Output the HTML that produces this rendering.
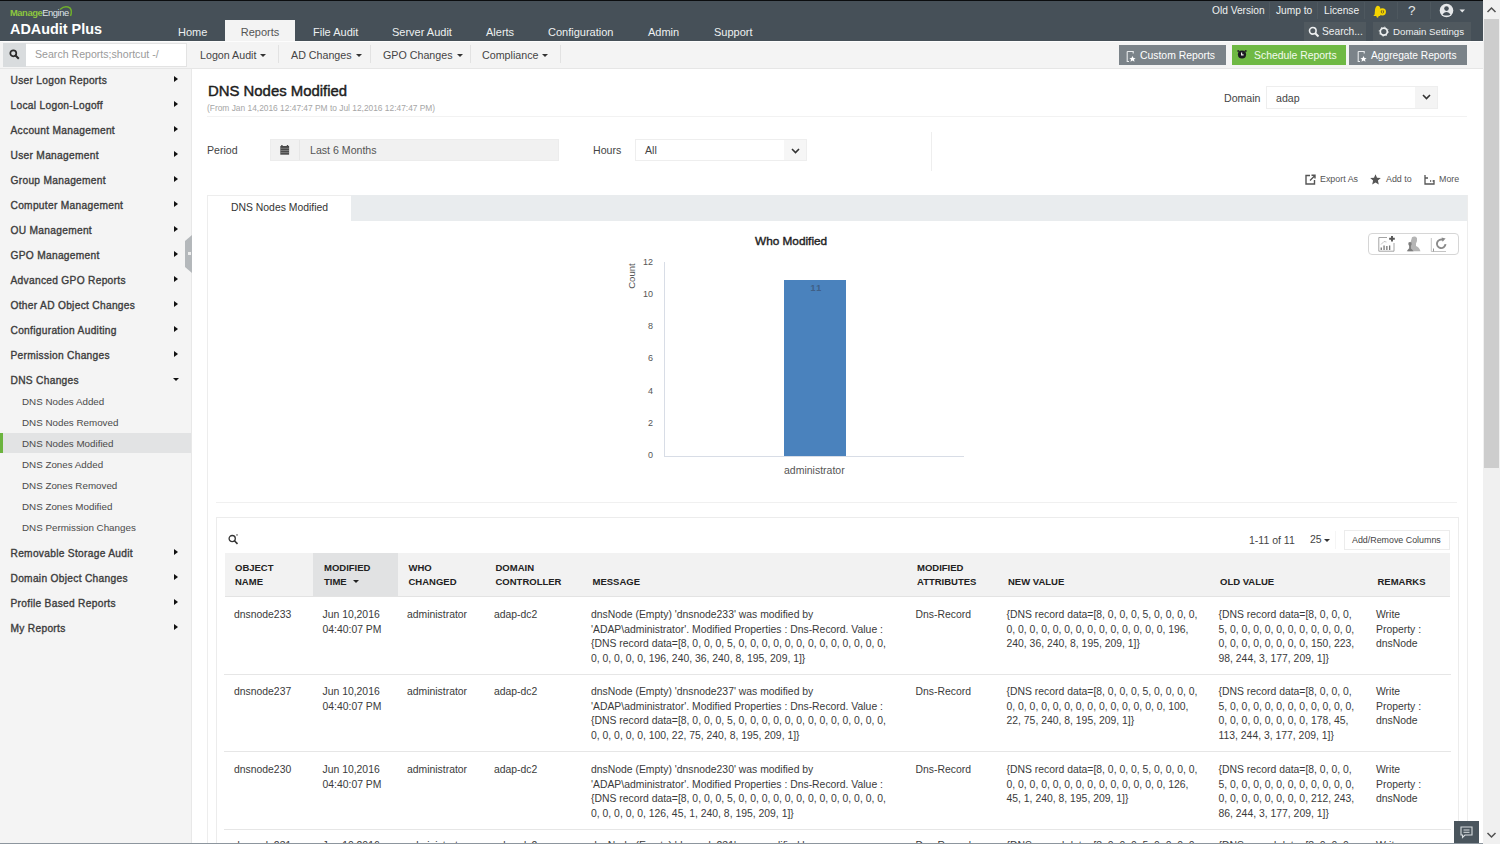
<!DOCTYPE html>
<html><head><meta charset="utf-8">
<style>
*{margin:0;padding:0;box-sizing:border-box}
html,body{width:1500px;height:844px;overflow:hidden;background:#fff;font-family:"Liberation Sans",sans-serif;color:#333}
.a{position:absolute;white-space:nowrap}
#top{position:absolute;left:0;top:0;width:1483px;height:41px;background:#465058;border-top:1px solid #0b0d0f}
.nav{position:absolute;top:19px;height:22px;line-height:20px;color:#eef0f1;font-size:11px;padding-top:2px}
#tool{position:absolute;left:0;top:41px;width:1483px;height:28px;background:#f4f4f4;border-bottom:1px solid #e6e6e6;border-top:1px solid #fdfdfd}
.tb{position:absolute;top:0px;height:27px;line-height:27px;font-size:10.7px;color:#444}
.sep{position:absolute;top:3px;width:1px;height:18px;background:#e2e2e2}
.caret{display:inline-block;width:0;height:0;border-left:3px solid transparent;border-right:3px solid transparent;border-top:3px solid #333;vertical-align:middle;margin-left:4px;position:relative;top:-1px}
.btn{position:absolute;top:3px;height:20px;line-height:21px;color:#fff;font-size:10.4px}
#side{position:absolute;left:0;top:69px;width:192px;height:775px;background:#f4f4f4;border-right:1px solid #e8e8e8}
.si{position:absolute;left:10.5px;height:16px;line-height:16px;font-size:10.2px;letter-spacing:0.3px;color:#3c3c3c;-webkit-text-stroke:0.35px #3c3c3c}
.sa{position:absolute;left:174px;width:0;height:0;border-top:3.5px solid transparent;border-bottom:3.5px solid transparent;border-left:4.5px solid #111}
.ss{position:absolute;left:22px;height:16px;line-height:16px;font-size:9.8px;color:#4a4a4a}
.t{position:absolute;white-space:nowrap;height:16px;line-height:16px}
</style></head><body>
<div id="top">
  <div class="a" style="left:10px;top:6px;font-size:9.4px;font-weight:bold;letter-spacing:-0.45px;line-height:11px"><span style="color:#8cc63f">Manage</span><span style="color:#dfe3e6;font-weight:normal">Engine</span></div><svg class="a" style="left:57px;top:3px" width="17" height="15" viewBox="0 0 17 15"><path d="M3 5.5 Q8 1 13 4 Q15.5 7 13.5 12" fill="none" stroke="#6fae2c" stroke-width="1.5"/></svg>
  <div class="a" style="left:10px;top:20px;font-size:14.4px;font-weight:bold;color:#fff;line-height:16px">ADAudit Plus</div>
  <div class="nav" style="left:178px">Home</div>
  <div class="nav" style="left:225px;width:70px;background:#f3f3f3;color:#555;text-align:center">Reports</div>
  <div class="nav" style="left:313px">File Audit</div>
  <div class="nav" style="left:392px">Server Audit</div>
  <div class="nav" style="left:486px">Alerts</div>
  <div class="nav" style="left:548px">Configuration</div>
  <div class="nav" style="left:648px">Admin</div>
  <div class="nav" style="left:714px">Support</div>

  <div class="a" style="left:1212px;top:2px;height:16px;line-height:16px;font-size:10.2px;color:#eef0f1">Old Version</div>
  <div class="a" style="left:1269px;top:1px;width:1px;height:17px;background:#4e585f"></div>
  <div class="a" style="left:1276px;top:2px;height:16px;line-height:16px;font-size:10.2px;color:#eef0f1">Jump to</div>
  <div class="a" style="left:1317px;top:1px;width:1px;height:17px;background:#4e585f"></div>
  <div class="a" style="left:1324px;top:2px;height:16px;line-height:16px;font-size:10.2px;color:#eef0f1">License</div>
  <div class="a" style="left:1364px;top:1px;width:1px;height:17px;background:#4e585f"></div>
  <svg class="a" style="left:1372px;top:3px" width="15" height="14" viewBox="0 0 15 14"><path d="M1.3 12 L2.6 10.5 L3 6 Q3.4 2 6 1.8 Q8 2 8.3 4 L8.3 12 Z" fill="#f5d400"/><circle cx="5.5" cy="12.6" r="1.1" fill="#f5d400"/><circle cx="10.4" cy="7.8" r="3.6" fill="#f5d400"/><circle cx="10.4" cy="7.8" r="1.7" fill="#7a6a20"/><rect x="9.9" y="6.3" width="1" height="2.6" fill="#f5d400"/></svg>
  <div class="a" style="left:1397px;top:1px;width:1px;height:17px;background:#4e585f"></div>
  <div class="a" style="left:1408px;top:1px;height:18px;line-height:18px;font-size:13.5px;color:#e6e8ea">?</div>
  <div class="a" style="left:1430px;top:1px;width:1px;height:17px;background:#4e585f"></div>
  <svg class="a" style="left:1439px;top:2px" width="28" height="16" viewBox="0 0 28 16"><circle cx="7.5" cy="7.5" r="6.8" fill="#e6e8ea"/><circle cx="7.5" cy="5.6" r="2.3" fill="#465058"/><path d="M3.6 11.2 Q7.5 7 11.4 11.2 L11 12 Q7.5 13 4 12 Z" fill="#465058"/><path d="M20.5 6.5 L26 6.5 L23.25 9.5 Z" fill="#e6e8ea"/></svg>
  <div class="a" style="left:1304px;top:21px;width:62px;height:19px;background:#50595f"></div>
  <svg class="a" style="left:1308px;top:25px" width="12" height="12" viewBox="0 0 12 12"><circle cx="4.8" cy="4.8" r="3.3" fill="none" stroke="#eef0f1" stroke-width="1.6"/><path d="M7.2 7.2 L10.5 10.5" stroke="#eef0f1" stroke-width="2"/></svg>
  <div class="a" style="left:1322px;top:23px;height:16px;line-height:16px;font-size:10.2px;color:#eef0f1">Search...</div>
  <div class="a" style="left:1373px;top:21px;width:98px;height:19px;background:#50595f"></div>
  <svg class="a" style="left:1378px;top:25px" width="12" height="12" viewBox="0 0 12 12"><circle cx="5.8" cy="5.6" r="3.5" fill="none" stroke="#eef0f1" stroke-width="1.7"/><circle cx="5.8" cy="5.6" r="4.6" fill="none" stroke="#eef0f1" stroke-width="0.9" stroke-dasharray="1.2 2.4"/></svg>
  <div class="a" style="left:1393px;top:23px;height:16px;line-height:16px;font-size:9.7px;color:#eef0f1">Domain Settings</div>
</div>
<div id="tool">
  <div class="a" style="left:3px;top:1px;width:23px;height:24px;background:#d9dcde"></div>
  <svg class="a" style="left:9px;top:7px" width="11" height="11" viewBox="0 0 11 11"><circle cx="4.3" cy="4.3" r="3" fill="none" stroke="#2b2b2b" stroke-width="1.7"/><path d="M6.5 6.5 L9.8 9.8" stroke="#2b2b2b" stroke-width="2"/></svg>
  <div class="a" style="left:26px;top:1px;width:161px;height:24px;background:#fff;border:1px solid #e3e3e3;border-left:none"></div>
  <div class="a" style="left:35px;top:4px;height:16px;line-height:16px;font-size:10.6px;color:#9a9a9a">Search Reports;shortcut -/</div>
  <div class="tb" style="left:200px">Logon Audit<span class="caret"></span></div>
  <div class="sep" style="left:278px"></div>
  <div class="tb" style="left:291px">AD Changes<span class="caret"></span></div>
  <div class="sep" style="left:370px"></div>
  <div class="tb" style="left:383px">GPO Changes<span class="caret"></span></div>
  <div class="sep" style="left:470px"></div>
  <div class="tb" style="left:482px">Compliance<span class="caret"></span></div>
  <div class="sep" style="left:560px"></div>
  <div class="btn" style="left:1119px;width:107px;background:#7b8389"></div>
  <svg class="a" style="left:1125.5px;top:7.5px" width="11" height="13" viewBox="0 0 11 13"><path d="M1.2 1.5 H7.2 V3.5 M1.2 1.5 V11.5 H3" fill="none" stroke="#e8eaec" stroke-width="1.1"/><path d="M6.5 6 L7.5 8 L9.6 8.2 L8 9.6 L8.5 11.7 L6.5 10.6 L4.5 11.7 L5 9.6 L3.4 8.2 L5.5 8 Z" fill="#fff"/></svg>
  <div class="btn" style="left:1140px;font-size:10.4px">Custom Reports</div>
  <div class="btn" style="left:1232px;width:114px;background:#6fb944"></div>
  <svg class="a" style="left:1236px;top:6px" width="12" height="12" viewBox="0 0 12 12"><circle cx="6" cy="6.5" r="4.1" fill="#1c1a22"/><circle cx="2.3" cy="3" r="1.1" fill="#2a2a2a"/><circle cx="9.7" cy="3" r="1.1" fill="#2a2a2a"/><path d="M5.6 4.6 V6.9 H7.6" stroke="#eee" stroke-width="1.2" fill="none"/></svg>
  <div class="btn" style="left:1254px;font-size:10.4px;color:#f4fbef">Schedule Reports</div>
  <div class="btn" style="left:1349px;width:118px;background:#7b8389"></div>
  <svg class="a" style="left:1356.5px;top:7.5px" width="11" height="13" viewBox="0 0 11 13"><path d="M1.2 1.5 H7.2 V3.5 M1.2 1.5 V11.5 H3" fill="none" stroke="#e8eaec" stroke-width="1.1"/><path d="M6.5 6 L7.5 8 L9.6 8.2 L8 9.6 L8.5 11.7 L6.5 10.6 L4.5 11.7 L5 9.6 L3.4 8.2 L5.5 8 Z" fill="#fff"/></svg>
  <div class="btn" style="left:1371px;font-size:10.2px">Aggregate Reports</div>
</div>
<div id="side">
  <div class="a" style="left:0;top:364.0px;width:191px;height:20px;background:#e2e3e4"></div>
  <div class="a" style="left:0;top:364.0px;width:3px;height:20px;background:#6cb43f"></div>
  <div class="si" style="top:3.5px">User Logon Reports</div>
  <div class="sa" style="top:7.0px"></div>
  <div class="si" style="top:28.5px">Local Logon-Logoff</div>
  <div class="sa" style="top:32.0px"></div>
  <div class="si" style="top:53.5px">Account Management</div>
  <div class="sa" style="top:57.0px"></div>
  <div class="si" style="top:78.5px">User Management</div>
  <div class="sa" style="top:82.0px"></div>
  <div class="si" style="top:103.5px">Group Management</div>
  <div class="sa" style="top:107.0px"></div>
  <div class="si" style="top:128.5px">Computer Management</div>
  <div class="sa" style="top:132.0px"></div>
  <div class="si" style="top:153.5px">OU Management</div>
  <div class="sa" style="top:157.0px"></div>
  <div class="si" style="top:178.5px">GPO Management</div>
  <div class="sa" style="top:182.0px"></div>
  <div class="si" style="top:203.5px">Advanced GPO Reports</div>
  <div class="sa" style="top:207.0px"></div>
  <div class="si" style="top:228.5px">Other AD Object Changes</div>
  <div class="sa" style="top:232.0px"></div>
  <div class="si" style="top:253.5px">Configuration Auditing</div>
  <div class="sa" style="top:257.0px"></div>
  <div class="si" style="top:278.5px">Permission Changes</div>
  <div class="sa" style="top:282.0px"></div>
  <div class="si" style="top:303.5px">DNS Changes</div>
  <div class="a" style="left:173px;top:308.5px;width:0;height:0;border-left:3.5px solid transparent;border-right:3.5px solid transparent;border-top:3.0px solid #111"></div>
  <div class="si" style="top:476.5px">Removable Storage Audit</div>
  <div class="sa" style="top:480.0px"></div>
  <div class="si" style="top:501.5px">Domain Object Changes</div>
  <div class="sa" style="top:505.0px"></div>
  <div class="si" style="top:526.5px">Profile Based Reports</div>
  <div class="sa" style="top:530.0px"></div>
  <div class="si" style="top:551.5px">My Reports</div>
  <div class="sa" style="top:555.0px"></div>
  <div class="ss" style="top:324.5px">DNS Nodes Added</div>
  <div class="ss" style="top:345.5px">DNS Nodes Removed</div>
  <div class="ss" style="top:366.5px">DNS Nodes Modified</div>
  <div class="ss" style="top:387.5px">DNS Zones Added</div>
  <div class="ss" style="top:408.5px">DNS Zones Removed</div>
  <div class="ss" style="top:430.0px">DNS Zones Modified</div>
  <div class="ss" style="top:451.0px">DNS Permission Changes</div>
  <svg class="a" style="left:185px;top:166.0px" width="7" height="38" viewBox="0 0 7 38"><path d="M0 6 L7 0 L7 38 L0 32 Z" fill="#b4b8bb"/><rect x="3" y="17" width="3" height="3" fill="#eee"/></svg>
</div>
<div id="main">
  <div class="t" style="left:208px;top:82px;height:18px;line-height:18px;font-size:14.9px;color:#1e1e1e;-webkit-text-stroke:0.45px #1e1e1e">DNS Nodes Modified</div>
  <div class="t" style="left:207px;top:100.5px;height:14px;line-height:14px;font-size:8.4px;color:#a6a6a6">(From Jan 14,2016 12:47:47 PM to Jul 12,2016 12:47:47 PM)</div>
  <div class="a" style="left:207px;top:116px;width:1260px;height:1px;background:#f2f2f2"></div>
  <div class="t" style="left:1224px;top:90.0px;font-size:10.6px;color:#444">Domain</div>
  <div class="a" style="left:1266px;top:86px;width:172px;height:23px;background:#fff;border:1px solid #eeeeee"></div>
  <div class="a" style="left:1415px;top:87px;width:22px;height:21px;background:#f4f4f4"></div>
  <svg class="a" style="left:1422px;top:94px" width="9" height="6" viewBox="0 0 9 6"><path d="M1 1 L4.5 4.5 L8 1" fill="none" stroke="#333" stroke-width="1.6"/></svg>
  <div class="t" style="left:1276px;top:90.0px;font-size:10.6px;color:#444">adap</div>

  <div class="t" style="left:207px;top:142.0px;font-size:10.6px;color:#444">Period</div>
  <div class="a" style="left:270px;top:139px;width:289px;height:22px;background:#f1f1f1;border:1px solid #ececec"></div>
  <div class="a" style="left:299px;top:140px;width:1px;height:20px;background:#e6e6e6"></div>
  <svg class="a" style="left:280px;top:145px" width="10" height="10" viewBox="0 0 10 10"><rect x="0.3" y="1" width="8.8" height="8.7" fill="#4a4a4a"/><rect x="1.2" y="0" width="1.4" height="1.5" fill="#4a4a4a"/><rect x="6.8" y="0" width="1.4" height="1.5" fill="#4a4a4a"/><path d="M0.3 3.3 H9.1 M0.3 5.5 H9.1 M0.3 7.6 H9.1" stroke="#9a9a9a" stroke-width="0.6"/></svg>
  <div class="t" style="left:310px;top:142.0px;font-size:10.6px;color:#555">Last 6 Months</div>

  <div class="t" style="left:593px;top:142.0px;font-size:10.6px;color:#444">Hours</div>
  <div class="a" style="left:635px;top:139px;width:172px;height:22px;background:#fff;border:1px solid #eeeeee"></div>
  <div class="a" style="left:784px;top:140px;width:22px;height:20px;background:#f6f6f6"></div>
  <svg class="a" style="left:791px;top:147.5px" width="9" height="6" viewBox="0 0 9 6"><path d="M1 1 L4.5 4.5 L8 1" fill="none" stroke="#333" stroke-width="1.6"/></svg>
  <div class="t" style="left:645px;top:142.0px;font-size:10.6px;color:#444">All</div>
  <div class="a" style="left:931px;top:132px;width:1px;height:39px;background:#eeeeee"></div>

  <svg class="a" style="left:1305px;top:174px" width="11" height="11" viewBox="0 0 11 11"><path d="M5 1.5 H1 V10 H9.5 V6" fill="none" stroke="#555" stroke-width="1.4"/><path d="M5 6.5 L9.5 2 M6.5 1.2 H10 V4.5" fill="none" stroke="#555" stroke-width="1.4"/></svg>
  <div class="t" style="left:1320px;top:171.0px;font-size:8.9px;color:#555">Export As</div>
  <svg class="a" style="left:1370px;top:174px" width="11" height="11" viewBox="0 0 11 11"><path d="M5.5 0.3 L7 3.8 L10.8 4.1 L7.9 6.6 L8.8 10.4 L5.5 8.4 L2.2 10.4 L3.1 6.6 L0.2 4.1 L4 3.8 Z" fill="#555"/></svg>
  <div class="t" style="left:1386px;top:171.0px;font-size:8.9px;color:#555">Add to</div>
  <svg class="a" style="left:1424px;top:174px" width="11" height="11" viewBox="0 0 11 11"><path d="M1 1 V10 H10 V6" fill="none" stroke="#555" stroke-width="1.3"/><path d="M1 4 H4 M6 7 H7.2 M8.6 7 H10" stroke="#555" stroke-width="1.3"/></svg>
  <div class="t" style="left:1439px;top:171.0px;font-size:8.9px;color:#555">More</div>

  <div class="a" style="left:207px;top:195px;width:1261px;height:649px;border:1px solid #ededed;border-bottom:none"></div>
  <div class="a" style="left:351px;top:195px;width:1116px;height:26px;background:#e9ecee"></div>
  <div class="t" style="left:231px;top:200.0px;font-size:10.4px;color:#333">DNS Nodes Modified</div>
  <div class="a" style="left:1368px;top:233px;width:91px;height:22px;border:1px solid #d6d6d6;border-radius:4px;background:#fff"></div>
  <svg class="a" style="left:1365px;top:230px" width="97" height="28" viewBox="0 0 97 28"><path d="M14 7.5 H22 M13.8 7.3 V21.2 H29 V13" fill="none" stroke="#9a9a9a" stroke-width="0.9"/><path d="M16 14.5 L19 11.5 L21.5 12" fill="none" stroke="#aaa" stroke-width="0.7"/><rect x="15.6" y="17.5" width="1.3" height="2.5" fill="#777"/><rect x="18.4" y="15.5" width="1.3" height="4.5" fill="#777"/><rect x="21.2" y="16" width="1.3" height="4" fill="#777"/><rect x="24" y="15.5" width="1.3" height="4.5" fill="#777"/><path d="M27 6 V11.5 M24.2 8.8 H29.8" stroke="#555" stroke-width="1.9"/><path d="M47 7.2 Q50 5.6 52 8 Q52.5 11 51 13.5 L51 16 Q54 17 55.5 21.3 L43 21.3 Z" fill="#b5b5b5"/><path d="M41.8 21.2 Q43 19.5 44.3 18.6 L44.2 16 Q42.8 14 43.5 12.5 Q45 11.5 46.5 12.5 Q47 14.5 45.9 16 L45.9 18.6 Q47.5 19.6 48.5 21.2 Z" fill="#7d7d7d"/><path d="M66.3 8 V21.5 H81" fill="none" stroke="#bdbdbd" stroke-width="0.9"/><rect x="68" y="18.5" width="1" height="3" fill="#999"/><path d="M80.5 14.2 A4.3 4.3 0 1 1 78.2 10" fill="none" stroke="#8a8a8a" stroke-width="1.9"/><path d="M76.6 7.4 L80.6 8.6 L77.6 11.8 Z" fill="#8a8a8a"/></svg>

  <div class="t" style="left:755px;top:233px;font-size:11.8px;color:#1e1e1e;-webkit-text-stroke:0.4px #1e1e1e">Who Modified</div>
  <div class="a" style="left:623px;top:268px;width:18px;height:16px;line-height:16px;font-size:9.6px;color:#555;transform:rotate(-90deg);transform-origin:50% 50%;text-align:center;width:30px;left:617px">Count</div>
  <div class="a" style="left:664px;top:262px;width:1px;height:195px;background:#d8dde6"></div>
  <div class="a" style="left:664px;top:456px;width:300px;height:1px;background:#d8dde6"></div>
  <div class="a" style="left:784px;top:280px;width:62px;height:176px;background:#4a82bd"></div>
  <div class="t" style="left:810.5px;top:280px;font-size:9px;font-weight:bold;color:#3f5f86;letter-spacing:1.2px">11</div>
  <div class="t" style="left:784px;top:462px;font-size:10.5px;color:#555">administrator</div>
  <div class="t" style="left:625px;width:28px;text-align:right;top:253.6px;font-size:9px;color:#555">12</div>
  <div class="t" style="left:625px;width:28px;text-align:right;top:285.9px;font-size:9px;color:#555">10</div>
  <div class="t" style="left:625px;width:28px;text-align:right;top:318.2px;font-size:9px;color:#555">8</div>
  <div class="t" style="left:625px;width:28px;text-align:right;top:350.4px;font-size:9px;color:#555">6</div>
  <div class="t" style="left:625px;width:28px;text-align:right;top:382.7px;font-size:9px;color:#555">4</div>
  <div class="t" style="left:625px;width:28px;text-align:right;top:415.0px;font-size:9px;color:#555">2</div>
  <div class="t" style="left:625px;width:28px;text-align:right;top:447.2px;font-size:9px;color:#555">0</div>
  <div class="a" style="left:216px;top:502px;width:1241px;height:1px;background:#f0f0f0"></div>

</div>
<div id="table">
  <div class="a" style="left:216px;top:517px;width:1243px;height:330px;border:1px solid #ececec;border-bottom:none"></div>
  <svg class="a" style="left:228px;top:534px" width="11" height="11" viewBox="0 0 11 11"><circle cx="4.2" cy="4.6" r="3.1" fill="none" stroke="#333" stroke-width="1.3"/><path d="M6.4 6.8 L9.5 9.9" stroke="#333" stroke-width="1.6"/><path d="M8 0.5 L10 0.5 L9 2 Z" fill="#333"/></svg>
  <div class="t" style="left:1249px;top:532.0px;font-size:10.5px;color:#444">1-11 of 11</div>
  <div class="t" style="left:1310px;top:531.0px;font-size:10.5px;color:#444">25</div>
  <div class="a" style="left:1324px;top:539px;width:0;height:0;border-left:3px solid transparent;border-right:3px solid transparent;border-top:3px solid #333"></div>
  <div class="a" style="left:1335px;top:531px;width:1px;height:18px;background:#f5f5f5"></div>
  <div class="a" style="left:1344px;top:530px;width:106px;height:20px;border:1px solid #ececec;background:#fff"></div>
  <div class="t" style="left:1352px;top:532.0px;font-size:8.9px;color:#444">Add/Remove Columns</div>
  <div class="a" style="left:225px;top:553px;width:1225px;height:44px;background:#f2f2f2;border-bottom:1px solid #e3e3e3"></div>
  <div class="a" style="left:313px;top:553px;width:85px;height:43px;background:#e1e2e3"></div>
  <div class="t" style="left:235.0px;top:560.2px;font-size:9.5px;font-weight:bold;color:#222">OBJECT</div>
  <div class="t" style="left:235.0px;top:574.0px;font-size:9.5px;font-weight:bold;color:#222">NAME</div>
  <div class="t" style="left:324.0px;top:560.2px;font-size:9.5px;font-weight:bold;color:#222">MODIFIED</div>
  <div class="t" style="left:324.0px;top:574.0px;font-size:9.5px;font-weight:bold;color:#222">TIME</div>
  <div class="t" style="left:408.5px;top:560.2px;font-size:9.5px;font-weight:bold;color:#222">WHO</div>
  <div class="t" style="left:408.5px;top:574.0px;font-size:9.5px;font-weight:bold;color:#222">CHANGED</div>
  <div class="t" style="left:495.5px;top:560.2px;font-size:9.5px;font-weight:bold;color:#222">DOMAIN</div>
  <div class="t" style="left:495.5px;top:574.0px;font-size:9.5px;font-weight:bold;color:#222">CONTROLLER</div>
  <div class="t" style="left:592.5px;top:574.0px;font-size:9.5px;font-weight:bold;color:#222">MESSAGE</div>
  <div class="t" style="left:917.0px;top:560.2px;font-size:9.5px;font-weight:bold;color:#222">MODIFIED</div>
  <div class="t" style="left:917.0px;top:574.0px;font-size:9.5px;font-weight:bold;color:#222">ATTRIBUTES</div>
  <div class="t" style="left:1008.0px;top:574.0px;font-size:9.5px;font-weight:bold;color:#222">NEW VALUE</div>
  <div class="t" style="left:1220.0px;top:574.0px;font-size:9.5px;font-weight:bold;color:#222">OLD VALUE</div>
  <div class="t" style="left:1377.5px;top:574.0px;font-size:9.5px;font-weight:bold;color:#222">REMARKS</div>
  <div class="a" style="left:353px;top:580px;width:0;height:0;border-left:3.5px solid transparent;border-right:3.5px solid transparent;border-top:3.5px solid #222"></div>
  <div class="t" style="left:234.0px;top:607.0px;font-size:10.4px;color:#3a3a3a">dnsnode233</div>
  <div class="t" style="left:322.5px;top:607.0px;font-size:10.4px;color:#3a3a3a">Jun 10,2016</div>
  <div class="t" style="left:322.5px;top:621.5px;font-size:10.4px;color:#3a3a3a">04:40:07 PM</div>
  <div class="t" style="left:407.0px;top:607.0px;font-size:10.4px;color:#3a3a3a">administrator</div>
  <div class="t" style="left:494.0px;top:607.0px;font-size:10.4px;color:#3a3a3a">adap-dc2</div>
  <div class="t" style="left:591.0px;top:607.0px;font-size:10.4px;color:#3a3a3a">dnsNode (Empty) 'dnsnode233' was modified by</div>
  <div class="t" style="left:591.0px;top:621.5px;font-size:10.4px;color:#3a3a3a">'ADAP\administrator'. Modified Properties : Dns-Record. Value :</div>
  <div class="t" style="left:591.0px;top:636.0px;font-size:10.4px;color:#3a3a3a">{DNS record data=[8, 0, 0, 0, 5, 0, 0, 0, 0, 0, 0, 0, 0, 0, 0, 0, 0, 0,</div>
  <div class="t" style="left:591.0px;top:650.5px;font-size:10.4px;color:#3a3a3a">0, 0, 0, 0, 0, 196, 240, 36, 240, 8, 195, 209, 1]}</div>
  <div class="t" style="left:915.5px;top:607.0px;font-size:10.4px;color:#3a3a3a">Dns-Record</div>
  <div class="t" style="left:1006.5px;top:607.0px;font-size:10.4px;color:#3a3a3a">{DNS record data=[8, 0, 0, 0, 5, 0, 0, 0, 0,</div>
  <div class="t" style="left:1006.5px;top:621.5px;font-size:10.4px;color:#3a3a3a">0, 0, 0, 0, 0, 0, 0, 0, 0, 0, 0, 0, 0, 0, 196,</div>
  <div class="t" style="left:1006.5px;top:636.0px;font-size:10.4px;color:#3a3a3a">240, 36, 240, 8, 195, 209, 1]}</div>
  <div class="t" style="left:1218.5px;top:607.0px;font-size:10.4px;color:#3a3a3a">{DNS record data=[8, 0, 0, 0,</div>
  <div class="t" style="left:1218.5px;top:621.5px;font-size:10.4px;color:#3a3a3a">5, 0, 0, 0, 0, 0, 0, 0, 0, 0, 0, 0,</div>
  <div class="t" style="left:1218.5px;top:636.0px;font-size:10.4px;color:#3a3a3a">0, 0, 0, 0, 0, 0, 0, 0, 150, 223,</div>
  <div class="t" style="left:1218.5px;top:650.5px;font-size:10.4px;color:#3a3a3a">98, 244, 3, 177, 209, 1]}</div>
  <div class="t" style="left:1376.0px;top:607.0px;font-size:10.4px;color:#3a3a3a">Write</div>
  <div class="t" style="left:1376.0px;top:621.5px;font-size:10.4px;color:#3a3a3a">Property :</div>
  <div class="t" style="left:1376.0px;top:636.0px;font-size:10.4px;color:#3a3a3a">dnsNode</div>
  <div class="t" style="left:234.0px;top:684.1px;font-size:10.4px;color:#3a3a3a">dnsnode237</div>
  <div class="t" style="left:322.5px;top:684.1px;font-size:10.4px;color:#3a3a3a">Jun 10,2016</div>
  <div class="t" style="left:322.5px;top:698.6px;font-size:10.4px;color:#3a3a3a">04:40:07 PM</div>
  <div class="t" style="left:407.0px;top:684.1px;font-size:10.4px;color:#3a3a3a">administrator</div>
  <div class="t" style="left:494.0px;top:684.1px;font-size:10.4px;color:#3a3a3a">adap-dc2</div>
  <div class="t" style="left:591.0px;top:684.1px;font-size:10.4px;color:#3a3a3a">dnsNode (Empty) 'dnsnode237' was modified by</div>
  <div class="t" style="left:591.0px;top:698.6px;font-size:10.4px;color:#3a3a3a">'ADAP\administrator'. Modified Properties : Dns-Record. Value :</div>
  <div class="t" style="left:591.0px;top:713.1px;font-size:10.4px;color:#3a3a3a">{DNS record data=[8, 0, 0, 0, 5, 0, 0, 0, 0, 0, 0, 0, 0, 0, 0, 0, 0, 0,</div>
  <div class="t" style="left:591.0px;top:727.6px;font-size:10.4px;color:#3a3a3a">0, 0, 0, 0, 0, 100, 22, 75, 240, 8, 195, 209, 1]}</div>
  <div class="t" style="left:915.5px;top:684.1px;font-size:10.4px;color:#3a3a3a">Dns-Record</div>
  <div class="t" style="left:1006.5px;top:684.1px;font-size:10.4px;color:#3a3a3a">{DNS record data=[8, 0, 0, 0, 5, 0, 0, 0, 0,</div>
  <div class="t" style="left:1006.5px;top:698.6px;font-size:10.4px;color:#3a3a3a">0, 0, 0, 0, 0, 0, 0, 0, 0, 0, 0, 0, 0, 0, 100,</div>
  <div class="t" style="left:1006.5px;top:713.1px;font-size:10.4px;color:#3a3a3a">22, 75, 240, 8, 195, 209, 1]}</div>
  <div class="t" style="left:1218.5px;top:684.1px;font-size:10.4px;color:#3a3a3a">{DNS record data=[8, 0, 0, 0,</div>
  <div class="t" style="left:1218.5px;top:698.6px;font-size:10.4px;color:#3a3a3a">5, 0, 0, 0, 0, 0, 0, 0, 0, 0, 0, 0,</div>
  <div class="t" style="left:1218.5px;top:713.1px;font-size:10.4px;color:#3a3a3a">0, 0, 0, 0, 0, 0, 0, 0, 178, 45,</div>
  <div class="t" style="left:1218.5px;top:727.6px;font-size:10.4px;color:#3a3a3a">113, 244, 3, 177, 209, 1]}</div>
  <div class="t" style="left:1376.0px;top:684.1px;font-size:10.4px;color:#3a3a3a">Write</div>
  <div class="t" style="left:1376.0px;top:698.6px;font-size:10.4px;color:#3a3a3a">Property :</div>
  <div class="t" style="left:1376.0px;top:713.1px;font-size:10.4px;color:#3a3a3a">dnsNode</div>
  <div class="t" style="left:234.0px;top:762.1px;font-size:10.4px;color:#3a3a3a">dnsnode230</div>
  <div class="t" style="left:322.5px;top:762.1px;font-size:10.4px;color:#3a3a3a">Jun 10,2016</div>
  <div class="t" style="left:322.5px;top:776.6px;font-size:10.4px;color:#3a3a3a">04:40:07 PM</div>
  <div class="t" style="left:407.0px;top:762.1px;font-size:10.4px;color:#3a3a3a">administrator</div>
  <div class="t" style="left:494.0px;top:762.1px;font-size:10.4px;color:#3a3a3a">adap-dc2</div>
  <div class="t" style="left:591.0px;top:762.1px;font-size:10.4px;color:#3a3a3a">dnsNode (Empty) 'dnsnode230' was modified by</div>
  <div class="t" style="left:591.0px;top:776.6px;font-size:10.4px;color:#3a3a3a">'ADAP\administrator'. Modified Properties : Dns-Record. Value :</div>
  <div class="t" style="left:591.0px;top:791.1px;font-size:10.4px;color:#3a3a3a">{DNS record data=[8, 0, 0, 0, 5, 0, 0, 0, 0, 0, 0, 0, 0, 0, 0, 0, 0, 0,</div>
  <div class="t" style="left:591.0px;top:805.6px;font-size:10.4px;color:#3a3a3a">0, 0, 0, 0, 0, 126, 45, 1, 240, 8, 195, 209, 1]}</div>
  <div class="t" style="left:915.5px;top:762.1px;font-size:10.4px;color:#3a3a3a">Dns-Record</div>
  <div class="t" style="left:1006.5px;top:762.1px;font-size:10.4px;color:#3a3a3a">{DNS record data=[8, 0, 0, 0, 5, 0, 0, 0, 0,</div>
  <div class="t" style="left:1006.5px;top:776.6px;font-size:10.4px;color:#3a3a3a">0, 0, 0, 0, 0, 0, 0, 0, 0, 0, 0, 0, 0, 0, 126,</div>
  <div class="t" style="left:1006.5px;top:791.1px;font-size:10.4px;color:#3a3a3a">45, 1, 240, 8, 195, 209, 1]}</div>
  <div class="t" style="left:1218.5px;top:762.1px;font-size:10.4px;color:#3a3a3a">{DNS record data=[8, 0, 0, 0,</div>
  <div class="t" style="left:1218.5px;top:776.6px;font-size:10.4px;color:#3a3a3a">5, 0, 0, 0, 0, 0, 0, 0, 0, 0, 0, 0,</div>
  <div class="t" style="left:1218.5px;top:791.1px;font-size:10.4px;color:#3a3a3a">0, 0, 0, 0, 0, 0, 0, 0, 212, 243,</div>
  <div class="t" style="left:1218.5px;top:805.6px;font-size:10.4px;color:#3a3a3a">86, 244, 3, 177, 209, 1]}</div>
  <div class="t" style="left:1376.0px;top:762.1px;font-size:10.4px;color:#3a3a3a">Write</div>
  <div class="t" style="left:1376.0px;top:776.6px;font-size:10.4px;color:#3a3a3a">Property :</div>
  <div class="t" style="left:1376.0px;top:791.1px;font-size:10.4px;color:#3a3a3a">dnsNode</div>
  <div class="t" style="left:234.0px;top:837.8px;font-size:10.4px;color:#3a3a3a">dnsnode231</div>
  <div class="t" style="left:322.5px;top:837.8px;font-size:10.4px;color:#3a3a3a">Jun 10,2016</div>
  <div class="t" style="left:322.5px;top:854.3px;font-size:10.4px;color:#3a3a3a">04:40:07 PM</div>
  <div class="t" style="left:407.0px;top:837.8px;font-size:10.4px;color:#3a3a3a">administrator</div>
  <div class="t" style="left:494.0px;top:837.8px;font-size:10.4px;color:#3a3a3a">adap-dc2</div>
  <div class="t" style="left:591.0px;top:837.8px;font-size:10.4px;color:#3a3a3a">dnsNode (Empty) 'dnsnode231' was modified by</div>
  <div class="t" style="left:591.0px;top:854.3px;font-size:10.4px;color:#3a3a3a">'ADAP\administrator'. Modified Properties : Dns-Record. Value :</div>
  <div class="t" style="left:591.0px;top:868.8px;font-size:10.4px;color:#3a3a3a">{DNS record data=[8, 0, 0, 0, 5, 0, 0, 0, 0, 0, 0, 0, 0, 0, 0, 0, 0, 0,</div>
  <div class="t" style="left:591.0px;top:883.3px;font-size:10.4px;color:#3a3a3a">0, 0, 0, 0, 0, 126, 45, 1, 240, 8, 195, 209, 1]}</div>
  <div class="t" style="left:915.5px;top:837.8px;font-size:10.4px;color:#3a3a3a">Dns-Record</div>
  <div class="t" style="left:1006.5px;top:837.8px;font-size:10.4px;color:#3a3a3a">{DNS record data=[8, 0, 0, 0, 5, 0, 0, 0, 0,</div>
  <div class="t" style="left:1006.5px;top:854.3px;font-size:10.4px;color:#3a3a3a">0, 0, 0, 0, 0, 0, 0, 0, 0, 0, 0, 0, 0, 0, 126,</div>
  <div class="t" style="left:1006.5px;top:868.8px;font-size:10.4px;color:#3a3a3a">45, 1, 240, 8, 195, 209, 1]}</div>
  <div class="t" style="left:1218.5px;top:837.8px;font-size:10.4px;color:#3a3a3a">{DNS record data=[8, 0, 0, 0,</div>
  <div class="t" style="left:1218.5px;top:854.3px;font-size:10.4px;color:#3a3a3a">5, 0, 0, 0, 0, 0, 0, 0, 0, 0, 0, 0,</div>
  <div class="t" style="left:1218.5px;top:868.8px;font-size:10.4px;color:#3a3a3a">0, 0, 0, 0, 0, 0, 0, 0, 212, 243,</div>
  <div class="t" style="left:1218.5px;top:883.3px;font-size:10.4px;color:#3a3a3a">86, 244, 3, 177, 209, 1]}</div>
  <div class="t" style="left:1376.0px;top:837.8px;font-size:10.4px;color:#3a3a3a">Write</div>
  <div class="t" style="left:1376.0px;top:854.3px;font-size:10.4px;color:#3a3a3a">Property :</div>
  <div class="t" style="left:1376.0px;top:868.8px;font-size:10.4px;color:#3a3a3a">dnsNode</div>
  <div class="a" style="left:224px;top:674px;width:1227px;height:1px;background:#e6e6e6"></div>
  <div class="a" style="left:224px;top:751px;width:1227px;height:1px;background:#e6e6e6"></div>
  <div class="a" style="left:224px;top:829px;width:1227px;height:1px;background:#e6e6e6"></div>
</div>
<div class="a" style="left:0;top:843px;width:1483px;height:1px;background:#8d969e"></div>
<div class="a" style="left:1454px;top:821px;width:25px;height:22px;background:#4a555d"></div>
<svg class="a" style="left:1460px;top:826px" width="13" height="13" viewBox="0 0 13 13"><path d="M1 1 H12 V9 H5 L2.5 11.5 V9 H1 Z" fill="none" stroke="#d8dcdf" stroke-width="1.1"/><path d="M3.5 4 H9.5 M3.5 6.3 H9.5" stroke="#d8dcdf" stroke-width="1"/></svg>
<div class="a" style="left:1483px;top:0;width:17px;height:844px;background:#f0f0f0"></div>
<div class="a" style="left:1484px;top:19px;width:15px;height:449px;background:#cdcdcd"></div>
<svg class="a" style="left:1486px;top:6px" width="11" height="7" viewBox="0 0 11 7"><path d="M1.5 6 L5.5 2 L9.5 6" fill="none" stroke="#505050" stroke-width="1.5"/></svg>
<svg class="a" style="left:1486px;top:832px" width="11" height="7" viewBox="0 0 11 7"><path d="M1.5 1 L5.5 5 L9.5 1" fill="none" stroke="#505050" stroke-width="1.5"/></svg>
</body></html>
